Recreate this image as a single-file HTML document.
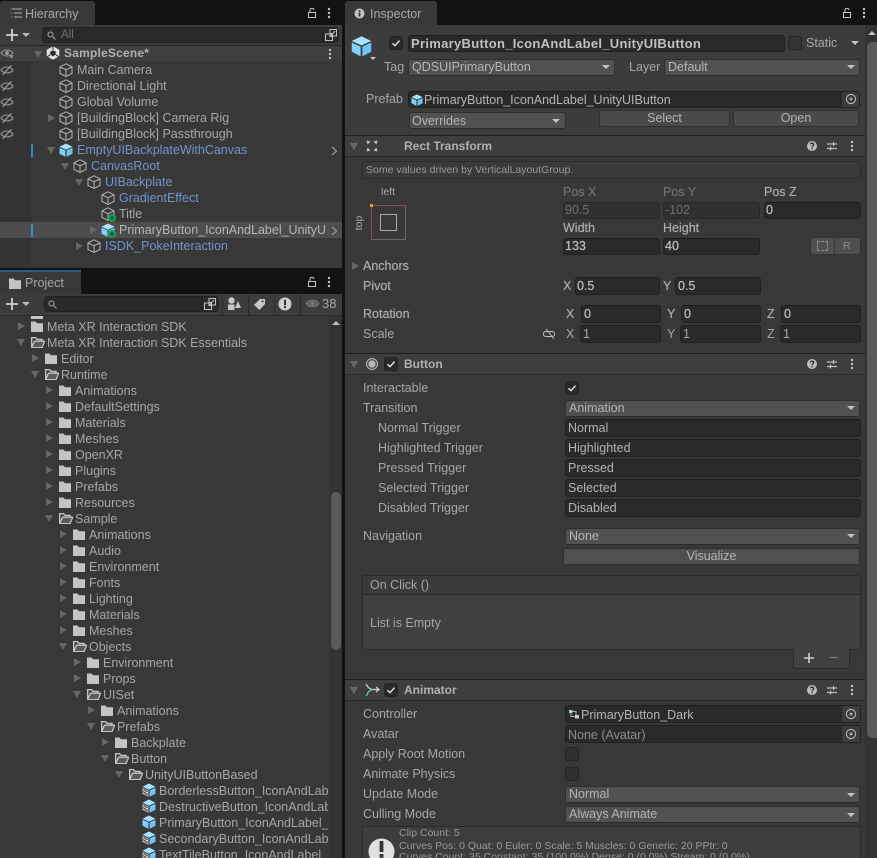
<!DOCTYPE html>
<html><head><meta charset="utf-8"><style>
html,body{margin:0;padding:0;background:#121212}
#r{position:relative;width:877px;height:858px;overflow:hidden;background:#121212;font-family:"Liberation Sans",sans-serif;filter:blur(.35px)}
#r div,#r span,#r svg{position:absolute}
.t{white-space:pre;font-size:12.5px;line-height:16px;color:#a6a6a6}
.b{font-weight:bold;color:#b0b0b0;font-size:12px}
.m{color:#aaa;text-shadow:0 0 .6px currentColor}
.v{color:#bcbcbc;text-shadow:0 0 .6px currentColor}
.l{color:#6f94cc}
.g{color:#777}
.s{font-size:10.5px;color:#999}
#pl .t{margin-top:1px}
.f{background:#2a2a2a;border:1px solid #212121;border-top-color:#1c1c1c;border-radius:3px;box-sizing:border-box}
.d{background:#515151;border:1px solid #2f2f2f;border-bottom-color:#2a2a2a;border-radius:3px;box-sizing:border-box}
.p{background:#4a4a4a;border:1px solid #2f2f2f;border-radius:3px;box-sizing:border-box}
.c{background:#2a2a2a;border:1px solid #232323;border-radius:3px;box-sizing:border-box}
.ar{width:0;height:0;border-left:7px solid #666;border-top:4px solid transparent;border-bottom:4px solid transparent}
.ad{width:0;height:0;border-top:7px solid #666;border-left:4px solid transparent;border-right:4px solid transparent}
.dn{width:0;height:0;border-top:4px solid #c4c4c4;border-left:4px solid transparent;border-right:4px solid transparent}
.hr{background:#1f1f1f;height:1px}
</style></head><body><div id="r">
<svg width="0" height="0" style="left:0;top:0"><defs>
<symbol id="cu" viewBox="0 0 14 14"><path d="M7 .8L13 3.8V10.4L7 13.4L1 10.4V3.8ZM1 3.8L7 6.8L13 3.8M7 6.8V13.4" fill="none" stroke="#b4b4b4" stroke-width="1"/></symbol>
<symbol id="bc" viewBox="0 0 14 14"><path d="M7 .5L13.5 3.7L7 6.6L.5 3.7Z" fill="#a8e2fc"/><path d="M.5 4.7L6.4 7.4V13.8L.5 10.8Z" fill="#7fd0fb"/><path d="M13.5 4.7L7.6 7.4V13.8L13.5 10.8Z" fill="#6fc4f5"/></symbol>
<symbol id="hc" viewBox="0 0 14 14"><path d="M7 .5L13.5 3.7L7 6.6L.5 3.7Z" fill="#a8e2fc"/><path d="M.5 4.7L6.4 7.4V13.8L.5 10.8Z" fill="#c8c8c8"/><path d="M1.5 6L5.5 9M1 8.5L5.5 12" stroke="#333" stroke-width="1"/><path d="M13.5 4.7L7.6 7.4V13.8L13.5 10.8Z" fill="#6fc4f5"/></symbol>
<symbol id="fc" viewBox="0 0 12 11"><path d="M0 .5H4.5L6 2.2H12V11H0Z" fill="#c4c4c4"/></symbol>
<symbol id="fo" viewBox="0 0 14 11"><path d="M.7 10.3V.7H4.5L6 2.4H11V4.5" fill="none" stroke="#c4c4c4" stroke-width="1.4"/><path d="M3.5 4.2H13.7L11 10.6H.7Z" fill="#5a5a5a" stroke="#c4c4c4" stroke-width="1.3"/></symbol>
<symbol id="ey" viewBox="0 0 14 10"><path d="M1 5C4 1 10 1 13 5C10 9 4 9 1 5Z" fill="none" stroke="#999" stroke-width="1.1"/><path d="M2.5 9.8L11.5 .2" stroke="#999" stroke-width="1.1"/><path d="M5 7.5L8 4" stroke="#999"/></symbol>
<symbol id="he" viewBox="0 0 14 14"><circle cx="7" cy="7" r="5" fill="#bdbdbd"/><path d="M5.3 5.4C5.5 3.7 8.7 3.8 8.7 5.6C8.7 6.8 7 6.8 7 8.3" fill="none" stroke="#333" stroke-width="1.3"/><rect x="6.3" y="9" width="1.4" height="1.4" fill="#333"/></symbol>
<symbol id="sl" viewBox="0 0 14 14"><path d="M2 5H12M2 9.5H12M8.5 3V7M5.5 7.5V11.5" stroke="#bdbdbd" stroke-width="1.2" fill="none"/></symbol>
<symbol id="dt" viewBox="0 0 4 12"><circle cx="2" cy="2" r="1.2" fill="#c4c4c4"/><circle cx="2" cy="6" r="1.2" fill="#c4c4c4"/><circle cx="2" cy="10" r="1.2" fill="#c4c4c4"/></symbol>
<symbol id="lk" viewBox="0 0 12 12"><path d="M2.5 10.5V5.5H9.5V10.5ZM4 5.5V3C4 .8 8 .8 8 3" fill="none" stroke="#c4c4c4" stroke-width="1"/></symbol>
<symbol id="tg" viewBox="0 0 12 12"><circle cx="6" cy="6" r="4.6" fill="none" stroke="#b5b5b5" stroke-width="1.1"/><circle cx="6" cy="6" r="1.4" fill="#b5b5b5"/></symbol>
<symbol id="ck" viewBox="0 0 12 12"><path d="M2.5 6.3L5 8.6L9.5 3.6" fill="none" stroke="#e2e2e2" stroke-width="1.4"/></symbol>
<symbol id="pl" viewBox="0 0 8 8"><circle cx="4" cy="4" r="4" fill="#13a35c"/><path d="M4 1.8V6.2M1.8 4H6.2" stroke="#0b3d22" stroke-width="1.1"/></symbol>
<symbol id="ext" viewBox="0 0 14 14"><path d="M6 1.5H12.5V8H8.5V5.5H6ZM1.5 6H6V8.5H8.5V12.5H1.5ZM6 8.5L11 3" fill="none" stroke="#c4c4c4" stroke-width="1"/></symbol>
<symbol id="plus" viewBox="0 0 12 12"><path d="M6 0V12M0 6H12" stroke="#d0d0d0" stroke-width="1.8"/></symbol>
</defs></svg>

<!-- HIERARCHY -->
<div style="left:0;top:1px;width:95px;height:24px;background:#383838;border-radius:3px 3px 0 0"></div>
<svg style="left:9px;top:7px" width="13" height="12" viewBox="0 0 13 12"><path d="M3 2H13M5 6H13M5 10H13" stroke="#b0b0b0"/><path d="M1 2H2M2 6H3.5M2 10H3.5" stroke="#888"/></svg>
<span class="t" style="left:25px;top:6px;color:#a8a8a8">Hierarchy</span>
<svg style="left:306px;top:7px" width="12" height="12"><use href="#lk"/></svg>
<svg style="left:327px;top:7px" width="4" height="12"><use href="#dt"/></svg>
<div style="left:0;top:25px;width:342px;height:243px;background:#383838"></div>
<div style="left:0;top:25px;width:342px;height:20px;background:#3c3c3c"></div>
<div style="left:0;top:45px;width:342px;height:1px;background:#282828"></div>
<div style="left:0;top:46px;width:31px;height:222px;background:#333"></div>
<div style="left:0;top:46px;width:342px;height:15px;background:#3f3f3f"></div>
<div style="left:0;top:222px;width:342px;height:16px;background:#4d4d4d"></div>
<svg style="left:6px;top:29px" width="12" height="12"><use href="#plus"/></svg>
<div class="dn" style="left:22px;top:33px;border-top-color:#bbb"></div>
<div style="left:42px;top:27px;width:297px;height:16px;background:#2a2a2a;border:1px solid #222;border-radius:4px;box-sizing:border-box"></div>
<svg style="left:47px;top:31px" width="9" height="9" viewBox="0 0 9 9"><circle cx="3.5" cy="3.5" r="2.5" fill="none" stroke="#aaa"/><path d="M5.5 5.5L8.5 8.5" stroke="#aaa"/></svg>
<span class="t g" style="left:61px;top:27px;font-size:11.5px;color:#6f6f6f">All</span>
<div style="left:322px;top:28px;width:1px;height:14px;background:#222"></div>
<svg style="left:324px;top:28px" width="14" height="14"><use href="#ext"/></svg>

<svg style="left:0;top:48px" width="14" height="10" viewBox="0 0 14 10"><path d="M1 5C4 1 10 1 13 5C10 9 4 9 1 5Z" fill="none" stroke="#999"/><circle cx="7" cy="5" r="2" fill="#999"/><rect x="10" y="7" width="3" height="3" fill="#888"/></svg>
<svg style="left:0;top:65px" width="14" height="10"><use href="#ey"/></svg>
<svg style="left:0;top:81px" width="14" height="10"><use href="#ey"/></svg>
<svg style="left:0;top:97px" width="14" height="10"><use href="#ey"/></svg>
<svg style="left:0;top:113px" width="14" height="10"><use href="#ey"/></svg>
<svg style="left:0;top:129px" width="14" height="10"><use href="#ey"/></svg>
<div style="left:31px;top:144px;width:2px;height:13px;background:#2f8dc8"></div>
<div style="left:31px;top:224px;width:2px;height:13px;background:#2f8dc8"></div>

<div class="ad" style="left:34px;top:51px"></div>
<svg style="left:46px;top:46px" width="14" height="14" viewBox="0 0 14 14"><path d="M7 .3L13.3 3.8V10.2L7 13.7L.7 10.2V3.8Z" fill="#e0e0e0"/><path d="M7 4.2L9.8 5.8V8.6L7 10.2L4.2 8.6V5.8Z" fill="#2e2e2e"/><path d="M7 .3V4M1 11L4 8.8M13 11L10 8.8" stroke="#2e2e2e" stroke-width="1"/></svg>
<span class="t b" style="left:64px;top:45px;letter-spacing:.2px">SampleScene*</span>
<svg style="left:328px;top:48px" width="4" height="12"><use href="#dt"/></svg>

<svg style="left:59px;top:63px" width="14" height="14"><use href="#cu"/></svg><span class="t" style="left:77px;top:62px">Main Camera</span>
<svg style="left:59px;top:79px" width="14" height="14"><use href="#cu"/></svg><span class="t" style="left:77px;top:78px">Directional Light</span>
<svg style="left:59px;top:95px" width="14" height="14"><use href="#cu"/></svg><span class="t" style="left:77px;top:94px">Global Volume</span>
<div class="ar" style="left:48px;top:114px"></div><svg style="left:59px;top:111px" width="14" height="14"><use href="#cu"/></svg><span class="t" style="left:77px;top:110px">[BuildingBlock] Camera Rig</span>
<svg style="left:59px;top:127px" width="14" height="14"><use href="#cu"/></svg><span class="t" style="left:77px;top:126px">[BuildingBlock] Passthrough</span>
<div class="ad" style="left:47px;top:147px"></div><svg style="left:59px;top:143px" width="14" height="14"><use href="#bc"/></svg><span class="t l" style="left:77px;top:142px">EmptyUIBackplateWithCanvas</span>
<svg style="left:331px;top:146px" width="7" height="10" viewBox="0 0 7 10"><path d="M1 1L5.5 5L1 9" fill="none" stroke="#999" stroke-width="1.2"/></svg>
<div class="ad" style="left:61px;top:163px"></div><svg style="left:73px;top:159px" width="14" height="14"><use href="#cu"/></svg><span class="t l" style="left:91px;top:158px">CanvasRoot</span>
<div class="ad" style="left:75px;top:179px"></div><svg style="left:87px;top:175px" width="14" height="14"><use href="#cu"/></svg><span class="t l" style="left:105px;top:174px">UIBackplate</span>
<svg style="left:101px;top:191px" width="14" height="14"><use href="#cu"/></svg><span class="t l" style="left:119px;top:190px">GradientEffect</span>
<svg style="left:101px;top:207px" width="14" height="14"><use href="#cu"/></svg><svg style="left:108px;top:214px" width="8" height="8"><use href="#pl"/></svg><span class="t" style="left:119px;top:206px">Title</span>
<div class="ar" style="left:90px;top:226px"></div><svg style="left:101px;top:223px" width="14" height="14"><use href="#bc"/></svg><svg style="left:108px;top:230px" width="8" height="8"><use href="#pl"/></svg>
<div style="left:119px;top:222px;width:206px;height:16px;overflow:hidden"><span class="t" style="left:0;top:0;color:#b4b4b4">PrimaryButton_IconAndLabel_UnityUIButton</span></div>
<svg style="left:331px;top:226px" width="7" height="10" viewBox="0 0 7 10"><path d="M1 1L5.5 5L1 9" fill="none" stroke="#999" stroke-width="1.2"/></svg>
<div class="ar" style="left:76px;top:242px"></div><svg style="left:87px;top:239px" width="14" height="14"><use href="#cu"/></svg><span class="t l" style="left:105px;top:238px">ISDK_PokeInteraction</span>

<!-- PROJECT -->
<div style="left:0;top:270px;width:81px;height:2px;background:#2c5d87"></div>
<div style="left:0;top:272px;width:81px;height:22px;background:#383838"></div>
<svg style="left:9px;top:278px" width="12" height="11"><use href="#fc"/></svg>
<span class="t" style="left:25px;top:275px">Project</span>
<svg style="left:306px;top:276px" width="12" height="12"><use href="#lk"/></svg>
<svg style="left:327px;top:276px" width="4" height="12"><use href="#dt"/></svg>
<div style="left:0;top:294px;width:342px;height:564px;background:#383838"></div>
<div style="left:0;top:294px;width:342px;height:21px;background:#3c3c3c"></div>
<div style="left:0;top:315px;width:342px;height:1px;background:#2c2c2c"></div>
<svg style="left:6px;top:298px" width="12" height="12"><use href="#plus"/></svg>
<div class="dn" style="left:22px;top:302px;border-top-color:#bbb"></div>
<div style="left:44px;top:296px;width:175px;height:16px;background:#2a2a2a;border:1px solid #222;border-radius:4px;box-sizing:border-box"></div>
<svg style="left:48px;top:300px" width="9" height="9" viewBox="0 0 9 9"><circle cx="3.5" cy="3.5" r="2.5" fill="none" stroke="#aaa"/><path d="M5.5 5.5L8.5 8.5" stroke="#aaa"/></svg>
<div style="left:201px;top:297px;width:1px;height:14px;background:#222"></div>
<svg style="left:203px;top:297px" width="14" height="14"><use href="#ext"/></svg>
<div style="left:222px;top:294px;width:1px;height:21px;background:#2c2c2c"></div>
<div style="left:248px;top:294px;width:1px;height:21px;background:#2c2c2c"></div>
<div style="left:274px;top:294px;width:1px;height:21px;background:#2c2c2c"></div>
<div style="left:300px;top:294px;width:1px;height:21px;background:#2c2c2c"></div>
<svg style="left:227px;top:297px" width="14" height="14" viewBox="0 0 14 14"><circle cx="4.5" cy="3.5" r="3.2" fill="#c8c8c8"/><rect x="1" y="7.5" width="6.5" height="5.5" fill="#c8c8c8"/><path d="M11 4L14 11H8Z" fill="#c8c8c8"/></svg>
<svg style="left:253px;top:297px" width="14" height="14" viewBox="0 0 14 14"><path d="M1 8L7 2H12V7L6.5 13Z" fill="#c8c8c8"/><circle cx="9.6" cy="4.4" r="1" fill="#3c3c3c"/></svg>
<svg style="left:278px;top:297px" width="14" height="14" viewBox="0 0 14 14"><circle cx="7" cy="7" r="6.5" fill="#d0d0d0"/><rect x="6" y="2.8" width="2" height="5.4" fill="#333"/><rect x="6" y="9.2" width="2" height="2" fill="#333"/></svg>
<svg style="left:305px;top:298px" width="15" height="11" viewBox="0 0 15 11"><path d="M1 5.5C4 1 11 1 14 5.5C11 10 4 10 1 5.5Z" fill="#5e5e5e" stroke="#777"/><circle cx="7.5" cy="5.5" r="2" fill="#777"/></svg>
<span class="t" style="left:322px;top:296px;color:#a6a6a6;font-size:13px">38</span>
<div style="left:330px;top:316px;width:12px;height:542px;background:#333"></div>
<div style="left:331px;top:492px;width:10px;height:158px;background:#5a5a5a;border-radius:5px"></div>
<div style="left:332px;top:321px;width:0;height:0;border-bottom:4px solid #c0c0c0;border-left:4px solid transparent;border-right:4px solid transparent"></div>

<div id="pl" style="left:0;top:316px;width:330px;height:542px;overflow:hidden">
<svg style="left:31px;top:-2px" width="12" height="5"><rect width="12" height="5" fill="#c4c4c4"/></svg>
<div class="ar" style="left:18px;top:6px"></div><svg style="left:31px;top:5px" width="12" height="11"><use href="#fc"/></svg><span class="t" style="left:47px;top:2px">Meta XR Interaction SDK</span>
<div class="ad" style="left:17px;top:23px"></div><svg style="left:31px;top:21px" width="14" height="11"><use href="#fo"/></svg><span class="t" style="left:47px;top:18px">Meta XR Interaction SDK Essentials</span>
<div class="ar" style="left:32px;top:38px"></div><svg style="left:45px;top:37px" width="12" height="11"><use href="#fc"/></svg><span class="t" style="left:61px;top:34px">Editor</span>
<div class="ad" style="left:31px;top:55px"></div><svg style="left:45px;top:53px" width="14" height="11"><use href="#fo"/></svg><span class="t" style="left:61px;top:50px">Runtime</span>
<div class="ar" style="left:46px;top:70px"></div><svg style="left:59px;top:69px" width="12" height="11"><use href="#fc"/></svg><span class="t" style="left:75px;top:66px">Animations</span>
<div class="ar" style="left:46px;top:86px"></div><svg style="left:59px;top:85px" width="12" height="11"><use href="#fc"/></svg><span class="t" style="left:75px;top:82px">DefaultSettings</span>
<div class="ar" style="left:46px;top:102px"></div><svg style="left:59px;top:101px" width="12" height="11"><use href="#fc"/></svg><span class="t" style="left:75px;top:98px">Materials</span>
<div class="ar" style="left:46px;top:118px"></div><svg style="left:59px;top:117px" width="12" height="11"><use href="#fc"/></svg><span class="t" style="left:75px;top:114px">Meshes</span>
<div class="ar" style="left:46px;top:134px"></div><svg style="left:59px;top:133px" width="12" height="11"><use href="#fc"/></svg><span class="t" style="left:75px;top:130px">OpenXR</span>
<div class="ar" style="left:46px;top:150px"></div><svg style="left:59px;top:149px" width="12" height="11"><use href="#fc"/></svg><span class="t" style="left:75px;top:146px">Plugins</span>
<div class="ar" style="left:46px;top:166px"></div><svg style="left:59px;top:165px" width="12" height="11"><use href="#fc"/></svg><span class="t" style="left:75px;top:162px">Prefabs</span>
<div class="ar" style="left:46px;top:182px"></div><svg style="left:59px;top:181px" width="12" height="11"><use href="#fc"/></svg><span class="t" style="left:75px;top:178px">Resources</span>
<div class="ad" style="left:45px;top:199px"></div><svg style="left:59px;top:197px" width="14" height="11"><use href="#fo"/></svg><span class="t" style="left:75px;top:194px">Sample</span>
<div class="ar" style="left:60px;top:214px"></div><svg style="left:73px;top:213px" width="12" height="11"><use href="#fc"/></svg><span class="t" style="left:89px;top:210px">Animations</span>
<div class="ar" style="left:60px;top:230px"></div><svg style="left:73px;top:229px" width="12" height="11"><use href="#fc"/></svg><span class="t" style="left:89px;top:226px">Audio</span>
<div class="ar" style="left:60px;top:246px"></div><svg style="left:73px;top:245px" width="12" height="11"><use href="#fc"/></svg><span class="t" style="left:89px;top:242px">Environment</span>
<div class="ar" style="left:60px;top:262px"></div><svg style="left:73px;top:261px" width="12" height="11"><use href="#fc"/></svg><span class="t" style="left:89px;top:258px">Fonts</span>
<div class="ar" style="left:60px;top:278px"></div><svg style="left:73px;top:277px" width="12" height="11"><use href="#fc"/></svg><span class="t" style="left:89px;top:274px">Lighting</span>
<div class="ar" style="left:60px;top:294px"></div><svg style="left:73px;top:293px" width="12" height="11"><use href="#fc"/></svg><span class="t" style="left:89px;top:290px">Materials</span>
<div class="ar" style="left:60px;top:310px"></div><svg style="left:73px;top:309px" width="12" height="11"><use href="#fc"/></svg><span class="t" style="left:89px;top:306px">Meshes</span>
<div class="ad" style="left:59px;top:327px"></div><svg style="left:73px;top:325px" width="14" height="11"><use href="#fo"/></svg><span class="t" style="left:89px;top:322px">Objects</span>
<div class="ar" style="left:74px;top:342px"></div><svg style="left:87px;top:341px" width="12" height="11"><use href="#fc"/></svg><span class="t" style="left:103px;top:338px">Environment</span>
<div class="ar" style="left:74px;top:358px"></div><svg style="left:87px;top:357px" width="12" height="11"><use href="#fc"/></svg><span class="t" style="left:103px;top:354px">Props</span>
<div class="ad" style="left:73px;top:375px"></div><svg style="left:87px;top:373px" width="14" height="11"><use href="#fo"/></svg><span class="t" style="left:103px;top:370px">UISet</span>
<div class="ar" style="left:88px;top:390px"></div><svg style="left:101px;top:389px" width="12" height="11"><use href="#fc"/></svg><span class="t" style="left:117px;top:386px">Animations</span>
<div class="ad" style="left:87px;top:407px"></div><svg style="left:101px;top:405px" width="14" height="11"><use href="#fo"/></svg><span class="t" style="left:117px;top:402px">Prefabs</span>
<div class="ar" style="left:102px;top:422px"></div><svg style="left:115px;top:421px" width="12" height="11"><use href="#fc"/></svg><span class="t" style="left:131px;top:418px">Backplate</span>
<div class="ad" style="left:101px;top:439px"></div><svg style="left:115px;top:437px" width="14" height="11"><use href="#fo"/></svg><span class="t" style="left:131px;top:434px">Button</span>
<div class="ad" style="left:115px;top:455px"></div><svg style="left:129px;top:453px" width="14" height="11"><use href="#fo"/></svg><span class="t" style="left:145px;top:450px">UnityUIButtonBased</span>
<svg style="left:142px;top:467px" width="14" height="14"><use href="#hc"/></svg><div style="left:159px;top:466px;width:169px;height:17px;overflow:hidden"><span class="t" style="left:0;top:0">BorderlessButton_IconAndLabel_UnityUI</span></div>
<svg style="left:142px;top:483px" width="14" height="14"><use href="#hc"/></svg><div style="left:159px;top:482px;width:169px;height:17px;overflow:hidden"><span class="t" style="left:0;top:0">DestructiveButton_IconAndLabel_UnityUI</span></div>
<svg style="left:142px;top:499px" width="14" height="14"><use href="#bc"/></svg><div style="left:159px;top:498px;width:169px;height:17px;overflow:hidden"><span class="t" style="left:0;top:0">PrimaryButton_IconAndLabel_UnityUI</span></div>
<svg style="left:142px;top:515px" width="14" height="14"><use href="#hc"/></svg><div style="left:159px;top:514px;width:169px;height:17px;overflow:hidden"><span class="t" style="left:0;top:0">SecondaryButton_IconAndLabel_UnityUI</span></div>
<svg style="left:142px;top:531px" width="14" height="14"><use href="#hc"/></svg><div style="left:159px;top:530px;width:169px;height:17px;overflow:hidden"><span class="t" style="left:0;top:0">TextTileButton_IconAndLabel_UnityUI</span></div>
</div>

<!-- INSPECTOR -->
<div style="left:345px;top:1px;width:92px;height:24px;background:#383838;border-radius:3px 3px 0 0"></div>
<svg style="left:354px;top:8px" width="11" height="11" viewBox="0 0 11 11"><circle cx="5.5" cy="5.5" r="5" fill="#c4c4c4"/><rect x="4.6" y="4.5" width="1.8" height="4" fill="#333"/><rect x="4.6" y="2.2" width="1.8" height="1.6" fill="#333"/></svg>
<span class="t" style="left:370px;top:6px">Inspector</span>
<svg style="left:841px;top:7px" width="12" height="12"><use href="#lk"/></svg>
<svg style="left:862px;top:7px" width="4" height="12"><use href="#dt"/></svg>
<div style="left:345px;top:25px;width:532px;height:833px;background:#383838"></div>
<div style="left:345px;top:25px;width:520px;height:110px;background:#3c3c3c"></div>
<div style="left:865px;top:25px;width:12px;height:833px;background:#333"></div>
<div style="left:867px;top:42px;width:10px;height:696px;background:#5a5a5a;border-radius:5px 0 0 5px"></div>
<div style="left:868px;top:31px;width:0;height:0;border-bottom:4px solid #c0c0c0;border-left:4px solid transparent;border-right:4px solid transparent"></div>

<svg style="left:351px;top:35px" width="21" height="22"><use href="#bc"/></svg>
<div class="dn" style="left:370px;top:57px;border-top-width:3px;border-left-width:3px;border-right-width:3px"></div>
<div class="c" style="left:389px;top:36px;width:14px;height:14px"></div><svg style="left:390px;top:37px" width="12" height="12"><use href="#ck"/></svg>
<div class="f" style="left:408px;top:35px;width:377px;height:17px"></div>
<span class="t b" style="left:411px;top:36px;color:#c0c0c0;font-size:13px;letter-spacing:.3px">PrimaryButton_IconAndLabel_UnityUIButton</span>
<div class="c" style="left:788px;top:36px;width:14px;height:14px;background:#333"></div>
<span class="t" style="left:806px;top:35px">Static</span>
<div class="dn" style="left:851px;top:41px"></div>
<span class="t" style="left:384px;top:59px">Tag</span>
<div class="d" style="left:408px;top:59px;width:207px;height:17px"></div><span class="t" style="left:412px;top:59px;color:#b4b4b4">QDSUIPrimaryButton</span><div class="dn" style="left:602px;top:65px"></div>
<span class="t" style="left:629px;top:59px">Layer</span>
<div class="d" style="left:664px;top:59px;width:196px;height:17px"></div><span class="t" style="left:668px;top:59px;color:#b4b4b4">Default</span><div class="dn" style="left:847px;top:65px"></div>
<span class="t" style="left:366px;top:91px">Prefab</span>
<div class="f" style="left:408px;top:91px;width:452px;height:17px"></div>
<div style="left:842px;top:92px;width:17px;height:15px;background:#3c3c3c"></div>
<svg style="left:845px;top:93px" width="12" height="12"><use href="#tg"/></svg>
<svg style="left:411px;top:94px" width="12" height="12"><use href="#bc"/></svg>
<span class="t" style="left:424px;top:92px;color:#b4b4b4">PrimaryButton_IconAndLabel_UnityUIButton</span>
<div class="d" style="left:409px;top:112px;width:157px;height:17px"></div><span class="t" style="left:412px;top:113px;color:#b4b4b4">Overrides</span><div class="dn" style="left:552px;top:119px"></div>
<div class="p" style="left:599px;top:110px;width:131px;height:17px"></div><span class="t" style="left:599px;top:110px;width:131px;text-align:center;color:#b4b4b4">Select</span>
<div class="p" style="left:733px;top:110px;width:126px;height:17px"></div><span class="t" style="left:733px;top:110px;width:126px;text-align:center;color:#b4b4b4">Open</span>

<!-- Rect Transform -->
<div class="hr" style="left:345px;top:135px;width:520px"></div>
<div style="left:345px;top:136px;width:520px;height:20px;background:#3e3e3e"></div>
<div style="left:345px;top:156px;width:520px;height:1px;background:#2c2c2c"></div>
<div class="ad" style="left:350px;top:143px"></div>
<svg style="left:366px;top:140px" width="12" height="12" viewBox="0 0 12 12"><path d="M.5 .5L4.5 1.5L1.5 4.5ZM11.5 .5L7.5 1.5L10.5 4.5ZM.5 11.5L1.5 7.5L4.5 10.5ZM11.5 11.5L7.5 10.5L10.5 7.5Z" fill="#c4c4c4"/></svg>
<span class="t b" style="left:404px;top:138px">Rect Transform</span>
<svg style="left:805px;top:139px" width="14" height="14"><use href="#he"/></svg>
<svg style="left:825px;top:139px" width="14" height="14"><use href="#sl"/></svg>
<svg style="left:850px;top:140px" width="4" height="12"><use href="#dt"/></svg>
<div style="left:362px;top:161px;width:499px;height:18px;background:#3a3a3a;border:1px solid #2a2a2a;border-radius:3px;box-sizing:border-box"></div>
<span class="t s" style="left:366px;top:162px">Some values driven by VerticalLayoutGroup.</span>
<span class="t s" style="left:381px;top:184px;color:#aaa">left</span>
<span class="t s" style="left:346px;top:215px;width:26px;text-align:center;transform:rotate(-90deg);color:#aaa">top</span>
<div style="left:371px;top:205px;width:35px;height:35px;box-sizing:border-box;border:1px solid;border-color:#8a5050 #7a6060 #706868 #8a5050"></div>
<div style="left:380px;top:214px;width:17px;height:17px;box-sizing:border-box;border:1px solid #a8a8a8"></div>
<div style="left:370px;top:204px;width:3px;height:3px;background:#d9a03a"></div>
<span class="t m" style="left:563px;top:184px;color:#6f6f6f">Pos X</span>
<span class="t m" style="left:663px;top:184px;color:#6f6f6f">Pos Y</span>
<span class="t m" style="left:764px;top:184px">Pos Z</span>
<div class="f" style="left:563px;top:202px;width:97px;height:17px;background:#303030;border-color:#282828"></div><span class="t g" style="left:565px;top:202px;color:#6e6e6e">90.5</span>
<div class="f" style="left:663px;top:202px;width:97px;height:17px;background:#303030;border-color:#282828"></div><span class="t g" style="left:665px;top:202px;color:#6e6e6e">-102</span>
<div class="f" style="left:764px;top:202px;width:97px;height:17px"></div><span class="t v" style="left:766px;top:202px">0</span>
<span class="t m" style="left:563px;top:220px">Width</span>
<span class="t m" style="left:663px;top:220px">Height</span>
<div class="f" style="left:563px;top:238px;width:97px;height:17px"></div><span class="t v" style="left:565px;top:238px">133</span>
<div class="f" style="left:663px;top:238px;width:97px;height:17px"></div><span class="t v" style="left:665px;top:238px">40</span>
<div style="left:810px;top:237px;width:51px;height:18px;background:#4f4f4f;border:1px solid #333;border-radius:3px;box-sizing:border-box"></div>
<div style="left:834px;top:238px;width:1px;height:16px;background:#383838"></div>
<div style="left:817px;top:241px;width:11px;height:10px;border:1px dashed #8c8c8c;box-sizing:border-box"></div>
<span class="t s" style="left:843px;top:238px;color:#888">R</span>
<div class="ar" style="left:352px;top:262px"></div>
<span class="t m" style="left:363px;top:258px">Anchors</span>
<span class="t m" style="left:363px;top:278px">Pivot</span>
<span class="t m" style="left:563px;top:278px">X</span><div class="f" style="left:575px;top:277px;width:85px;height:18px"></div><span class="t v" style="left:577px;top:278px">0.5</span>
<span class="t m" style="left:663px;top:278px">Y</span><div class="f" style="left:675px;top:277px;width:86px;height:18px"></div><span class="t v" style="left:678px;top:278px">0.5</span>
<span class="t m" style="left:363px;top:306px">Rotation</span>
<span class="t m" style="left:566px;top:306px">X</span><div class="f" style="left:581px;top:305px;width:80px;height:18px"></div><span class="t v" style="left:584px;top:306px">0</span>
<span class="t m" style="left:667px;top:306px">Y</span><div class="f" style="left:681px;top:305px;width:80px;height:18px"></div><span class="t v" style="left:684px;top:306px">0</span>
<span class="t m" style="left:767px;top:306px">Z</span><div class="f" style="left:781px;top:305px;width:80px;height:18px"></div><span class="t v" style="left:784px;top:306px">0</span>
<span class="t" style="left:363px;top:326px">Scale</span>
<svg style="left:543px;top:328px" width="14" height="12" viewBox="0 0 14 12"><path d="M3 3.5H9C12.5 3.5 12.5 8.5 9 8.5H3C-.5 8.5-.5 3.5 3 3.5ZM3 1L11 11" fill="none" stroke="#c0c0c0"/></svg>
<span class="t" style="left:566px;top:326px">X</span><div class="f" style="left:580px;top:325px;width:81px;height:18px"></div><span class="t" style="left:583px;top:326px">1</span>
<span class="t" style="left:667px;top:326px">Y</span><div class="f" style="left:680px;top:325px;width:81px;height:18px"></div><span class="t" style="left:683px;top:326px">1</span>
<span class="t" style="left:767px;top:326px">Z</span><div class="f" style="left:780px;top:325px;width:81px;height:18px"></div><span class="t" style="left:783px;top:326px">1</span>

<!-- Button -->
<div class="hr" style="left:345px;top:353px;width:520px"></div>
<div style="left:345px;top:354px;width:520px;height:20px;background:#3e3e3e"></div>
<div style="left:345px;top:374px;width:520px;height:1px;background:#2c2c2c"></div>
<div class="ad" style="left:350px;top:361px"></div>
<svg style="left:366px;top:358px" width="12" height="12" viewBox="0 0 12 12"><circle cx="6" cy="6" r="5.4" fill="none" stroke="#c4c4c4"/><circle cx="6" cy="6" r="3.7" fill="#b5b5b5"/></svg>
<div class="c" style="left:384px;top:357px;width:14px;height:14px"></div><svg style="left:385px;top:358px" width="12" height="12"><use href="#ck"/></svg>
<span class="t b" style="left:404px;top:356px">Button</span>
<svg style="left:805px;top:357px" width="14" height="14"><use href="#he"/></svg>
<svg style="left:825px;top:357px" width="14" height="14"><use href="#sl"/></svg>
<svg style="left:850px;top:358px" width="4" height="12"><use href="#dt"/></svg>
<span class="t" style="left:363px;top:380px">Interactable</span>
<div class="c" style="left:565px;top:381px;width:14px;height:14px"></div><svg style="left:566px;top:382px" width="12" height="12"><use href="#ck"/></svg>
<span class="t" style="left:363px;top:400px">Transition</span>
<div class="d" style="left:565px;top:400px;width:295px;height:17px"></div><span class="t" style="left:569px;top:400px;color:#b4b4b4">Animation</span><div class="dn" style="left:847px;top:406px"></div>
<span class="t" style="left:378px;top:420px">Normal Trigger</span><div class="f" style="left:565px;top:419px;width:296px;height:18px"></div><span class="t" style="left:568px;top:420px;color:#b4b4b4">Normal</span>
<span class="t" style="left:378px;top:440px">Highlighted Trigger</span><div class="f" style="left:565px;top:439px;width:296px;height:18px"></div><span class="t" style="left:568px;top:440px;color:#b4b4b4">Highlighted</span>
<span class="t" style="left:378px;top:460px">Pressed Trigger</span><div class="f" style="left:565px;top:459px;width:296px;height:18px"></div><span class="t" style="left:568px;top:460px;color:#b4b4b4">Pressed</span>
<span class="t" style="left:378px;top:480px">Selected Trigger</span><div class="f" style="left:565px;top:479px;width:296px;height:18px"></div><span class="t" style="left:568px;top:480px;color:#b4b4b4">Selected</span>
<span class="t" style="left:378px;top:500px">Disabled Trigger</span><div class="f" style="left:565px;top:499px;width:296px;height:18px"></div><span class="t" style="left:568px;top:500px;color:#b4b4b4">Disabled</span>
<span class="t" style="left:363px;top:528px">Navigation</span>
<div class="d" style="left:565px;top:528px;width:295px;height:17px"></div><span class="t" style="left:569px;top:528px;color:#b4b4b4">None</span><div class="dn" style="left:847px;top:534px"></div>
<div class="p" style="left:563px;top:548px;width:297px;height:17px;background:#505050"></div><span class="t" style="left:563px;top:548px;width:297px;text-align:center;color:#b4b4b4">Visualize</span>
<div style="left:362px;top:575px;width:499px;height:75px;background:#414141;border:1px solid #2a2a2a;border-radius:3px;box-sizing:border-box"></div>
<div style="left:363px;top:576px;width:497px;height:19px;background:#3a3a3a;border-bottom:1px solid #2a2a2a;box-sizing:border-box"></div>
<span class="t" style="left:370px;top:577px">On Click ()</span>
<span class="t" style="left:370px;top:615px">List is Empty</span>
<div style="left:793px;top:649px;width:57px;height:20px;background:#414141;border:1px solid #2a2a2a;border-top:none;border-radius:0 0 3px 3px;box-sizing:border-box"></div>
<svg style="left:804px;top:653px" width="10" height="10"><path d="M5 0V10M0 5H10" stroke="#d0d0d0" stroke-width="1.6"/></svg>
<div style="left:830px;top:657px;width:8px;height:1px;background:#808080"></div>

<!-- Animator -->
<div class="hr" style="left:345px;top:679px;width:520px"></div>
<div style="left:345px;top:680px;width:520px;height:20px;background:#3e3e3e"></div>
<div style="left:345px;top:700px;width:520px;height:1px;background:#2c2c2c"></div>
<div class="ad" style="left:350px;top:687px"></div>
<svg style="left:365px;top:683px" width="15" height="14" viewBox="0 0 15 14"><path d="M1 1C3 5 5 6.5 8 6.5H14M11 4L14 6.5L11 9" fill="none" stroke="#d0d0d0" stroke-width="1.3"/><path d="M8 6.5C4 7 2.5 9.5 1.5 13" fill="none" stroke="#5fd3a8" stroke-width="1.3"/></svg>
<div class="c" style="left:384px;top:683px;width:14px;height:14px"></div><svg style="left:385px;top:684px" width="12" height="12"><use href="#ck"/></svg>
<span class="t b" style="left:404px;top:682px">Animator</span>
<svg style="left:805px;top:683px" width="14" height="14"><use href="#he"/></svg>
<svg style="left:825px;top:683px" width="14" height="14"><use href="#sl"/></svg>
<svg style="left:850px;top:684px" width="4" height="12"><use href="#dt"/></svg>
<span class="t" style="left:363px;top:706px">Controller</span>
<div class="f" style="left:565px;top:705px;width:296px;height:18px"></div>
<div style="left:842px;top:706px;width:18px;height:16px;background:#3c3c3c"></div><svg style="left:845px;top:708px" width="12" height="12"><use href="#tg"/></svg>
<svg style="left:569px;top:709px" width="10" height="10" viewBox="0 0 10 10"><rect x="0" y="1" width="3.5" height="3" fill="#9ed8c4"/><rect x="6" y="6" width="4" height="3.5" fill="#ccc"/><path d="M3.5 2.5H7V6M2 4V7.5H6" fill="none" stroke="#b0b0b0"/></svg>
<span class="t" style="left:581px;top:707px;color:#b4b4b4">PrimaryButton_Dark</span>
<span class="t" style="left:363px;top:726px">Avatar</span>
<div class="f" style="left:565px;top:725px;width:296px;height:18px"></div>
<div style="left:842px;top:726px;width:18px;height:16px;background:#3c3c3c"></div><svg style="left:845px;top:728px" width="12" height="12"><use href="#tg"/></svg>
<span class="t" style="left:568px;top:727px;color:#8c8c8c">None (Avatar)</span>
<span class="t" style="left:363px;top:746px">Apply Root Motion</span><div class="c" style="left:565px;top:747px;width:14px;height:14px;background:#303030"></div>
<span class="t" style="left:363px;top:766px">Animate Physics</span><div class="c" style="left:565px;top:767px;width:14px;height:14px;background:#303030"></div>
<span class="t" style="left:363px;top:786px">Update Mode</span>
<div class="d" style="left:565px;top:786px;width:295px;height:17px"></div><span class="t" style="left:569px;top:786px;color:#b4b4b4">Normal</span><div class="dn" style="left:847px;top:793px"></div>
<span class="t" style="left:363px;top:806px">Culling Mode</span>
<div class="d" style="left:565px;top:806px;width:295px;height:17px"></div><span class="t" style="left:569px;top:806px;color:#b4b4b4">Always Animate</span><div class="dn" style="left:847px;top:813px"></div>
<div style="left:362px;top:826px;width:499px;height:40px;background:#3d3d3d;border:1px solid #2a2a2a;border-radius:3px;box-sizing:border-box"></div>
<svg style="left:368px;top:838px" width="27" height="27" viewBox="0 0 27 27"><circle cx="13.5" cy="13.5" r="13" fill="#e0e0e0"/><rect x="11.6" y="3" width="3.8" height="11" fill="#333"/><rect x="11.6" y="16" width="3.8" height="3.8" fill="#333"/></svg>
<span class="t s" style="left:399px;top:825px">Clip Count: 5</span>
<span class="t s" style="left:399px;top:838px">Curves Pos: 0 Quat: 0 Euler: 0 Scale: 5 Muscles: 0 Generic: 20 PPtr: 0</span>
<span class="t s" style="left:399px;top:849px">Curves Count: 35 Constant: 35 (100.0%) Dense: 0 (0.0%) Stream: 0 (0.0%)</span>
</div></body></html>
